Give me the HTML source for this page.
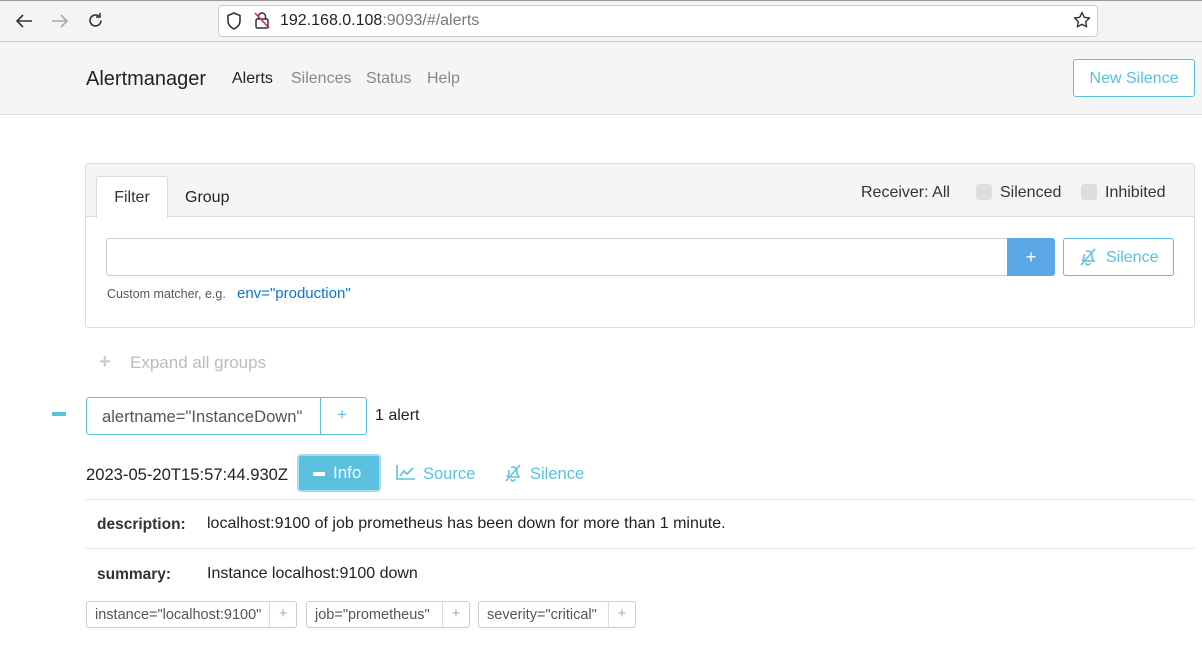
<!DOCTYPE html>
<html><head><meta charset="utf-8"><style>
*{box-sizing:border-box;margin:0;padding:0}
body{width:1202px;height:647px;overflow:hidden;background:#fff;font-family:"Liberation Sans","DejaVu Sans",sans-serif;color:#222;position:relative}
.a{position:absolute;white-space:nowrap}
.chrome{left:0;top:0;width:1202px;height:42px;background:#f5f4f3;border-top:1px solid #999;border-bottom:1px solid #ccc}
.url{left:218px;top:5px;width:880px;height:32px;background:#fff;border:1px solid #ccc;border-radius:4px}
.nav{left:0;top:42px;width:1202px;height:73px;background:#f5f5f5;border-bottom:1px solid #ddd}
.btn{border:1px solid #5bc0de;border-radius:3px;color:#5bc0de;background:#fff}
.tag{height:27px;border:1px solid #ccc;border-radius:3px;font-size:14.5px;color:#555;display:flex;align-items:center}
.tag span{padding:0 8px}
.tag b{font-weight:normal;border-left:1px solid #ddd;width:27px;text-align:center;color:#aaa;line-height:25px}
</style></head><body>
<div class="a chrome"></div>
<svg class="a" style="left:15px;top:13px" width="18" height="16" viewBox="0 0 18 16" fill="none" stroke="#333" stroke-width="1.6"><path d="M17 8H2M8 2L2 8l6 6"/></svg>
<svg class="a" style="left:51px;top:13px" width="18" height="16" viewBox="0 0 18 16" fill="none" stroke="#aaa" stroke-width="1.6"><path d="M1 8h15M10 2l6 6-6 6"/></svg>
<svg class="a" style="left:87px;top:12px" width="17" height="17" viewBox="0 0 17 17" fill="none" stroke="#333" stroke-width="1.6"><path d="M14 8.5a5.5 5.5 0 11-2-4.3"/><path d="M13 1v4h-4"/></svg>
<div class="a url"></div>
<svg class="a" style="left:226px;top:12px" width="16" height="18" viewBox="0 0 16 18"><path d="M8 1L2 3.5V9c0 4 3 6.5 6 8 3-1.5 6-4 6-8V3.5z" fill="none" stroke="#333" stroke-width="1.6"/></svg>
<svg class="a" style="left:254px;top:11px" width="16" height="18" viewBox="0 0 16 18"><rect x="2" y="8" width="12" height="9" rx="1.5" fill="none" stroke="#333" stroke-width="1.5"/><path d="M4.5 8V5.5a3.5 3.5 0 017 0V8" fill="none" stroke="#333" stroke-width="1.5"/><path d="M1 2l14 15" stroke="#e22850" stroke-width="1.6"/></svg>
<div class="a" style="left:280px;top:12px;font-size:16px;color:#222">192.168.0.108<span style="color:#777">:9093/#/alerts</span></div>
<svg class="a" style="left:1073px;top:11px" width="18" height="18" viewBox="0 0 18 18"><path d="M9 1.5l2.3 4.8 5.2.7-3.8 3.6.9 5.2L9 13.3l-4.6 2.5.9-5.2L1.5 7l5.2-.7z" fill="none" stroke="#333" stroke-width="1.4" stroke-linejoin="round"/></svg>

<div class="a nav"></div>
<div class="a" style="left:86px;top:68px;font-size:20px;color:#222">Alertmanager</div>
<div class="a" style="left:232px;top:70px;font-size:16px;color:#222">Alerts</div>
<div class="a" style="left:291px;top:70px;font-size:16px;color:#888">Silences</div>
<div class="a" style="left:366px;top:70px;font-size:16px;color:#888">Status</div>
<div class="a" style="left:427px;top:70px;font-size:16px;color:#888">Help</div>
<div class="a btn" style="left:1073px;top:59px;width:122px;height:38px;font-size:16px;line-height:37px;text-align:center">New Silence</div>

<div class="a" style="left:85px;top:163px;width:1110px;height:165px;border:1px solid #ddd;border-radius:3px"></div>
<div class="a" style="left:86px;top:164px;width:1108px;height:53px;background:#f5f5f6;border-bottom:1px solid #ddd"></div>
<div class="a" style="left:96px;top:176px;width:72px;height:42px;background:#fff;border:1px solid #ddd;border-bottom:none;border-radius:3px 3px 0 0;font-size:16px;color:#333;text-align:center;line-height:42px">Filter</div>
<div class="a" style="left:185px;top:189px;font-size:16px;color:#222">Group</div>
<div class="a" style="left:861px;top:184px;font-size:16px;color:#333">Receiver: All</div>
<div class="a" style="left:976px;top:184px;width:16px;height:16px;background:#ddd;border-radius:3px"></div>
<div class="a" style="left:1000px;top:184px;font-size:16px;color:#333">Silenced</div>
<div class="a" style="left:1081px;top:184px;width:16px;height:16px;background:#ddd;border-radius:3px"></div>
<div class="a" style="left:1105px;top:184px;font-size:16px;color:#333">Inhibited</div>
<div class="a" style="left:106px;top:238px;width:902px;height:38px;border:1px solid #ccc;border-right:none;border-radius:3px 0 0 3px"></div>
<div class="a" style="left:1007px;top:238px;width:48px;height:38px;background:#5ba7e6;border-radius:0 3px 3px 0;color:#fff;font-size:18px;text-align:center;line-height:38px">+</div>
<div class="a btn" style="left:1063px;top:238px;width:111px;height:38px;font-size:16px;line-height:37px;padding-left:42px">Silence</div>
<svg class="a" style="left:1078px;top:247px" width="20" height="20" viewBox="0 0 20 20" fill="none" stroke="#5bc0de" stroke-width="1.5"><path d="M5 14h11l-2-3V8a4 4 0 00-6-3.4M6 7v4l-2 3"/><path d="M8 16a2 2 0 004 0"/><path d="M3 18L17 2"/></svg>
<div class="a" style="left:107px;top:287px;font-size:12.5px;color:#555">Custom matcher, e.g.</div>
<div class="a" style="left:237px;top:285px;font-size:15px;color:#0a74d4">env="production"</div>

<div class="a" style="left:99px;top:351px;font-size:20px;color:#ccc;font-weight:bold">+</div>
<div class="a" style="left:130px;top:353px;font-size:17px;color:#bbb">Expand all groups</div>

<div class="a" style="left:52px;top:412px;width:14px;height:4px;background:#5bc0de"></div>
<div class="a" style="left:86px;top:397px;width:281px;height:38px;border:1px solid #5bc0de;border-radius:3px"></div>
<div class="a" style="left:320px;top:398px;width:1px;height:36px;background:#5bc0de"></div>
<div class="a" style="left:102px;top:407px;font-size:16.6px;color:#555">alertname="InstanceDown"</div>
<div class="a" style="left:337px;top:405px;font-size:17px;color:#5bc0de">+</div>
<div class="a" style="left:375px;top:407px;font-size:16px;color:#222">1 alert</div>

<div class="a" style="left:86px;top:465px;font-size:16.6px;color:#222">2023-05-20T15:57:44.930Z</div>
<div class="a" style="left:297px;top:454px;width:84px;height:38px;background:#5bc0de;border:2px solid #a6dcee;border-radius:4px;color:#fff;font-size:17px;line-height:34px;padding-left:14px"><span style="display:inline-block;width:12px;height:4px;background:#fff;vertical-align:middle;margin-right:8px"></span>Info</div>
<svg class="a" style="left:396px;top:464px" width="20" height="16" viewBox="0 0 20 16" fill="none" stroke="#5bc0de" stroke-width="1.6"><path d="M1 1v14h18"/><path d="M4 12l4-5 3 3 6-6"/></svg>
<div class="a" style="left:423px;top:465px;font-size:16.5px;color:#5bc0de">Source</div>
<svg class="a" style="left:503px;top:463px" width="20" height="20" viewBox="0 0 20 20" fill="none" stroke="#5bc0de" stroke-width="1.5"><path d="M5 14h11l-2-3V8a4 4 0 00-6-3.4M6 7v4l-2 3"/><path d="M8 16a2 2 0 004 0"/><path d="M3 18L17 2"/></svg>
<div class="a" style="left:530px;top:465px;font-size:16.5px;color:#5bc0de">Silence</div>

<div class="a" style="left:86px;top:499px;width:1109px;height:1px;background:#e5e5e5"></div>
<div class="a" style="left:97px;top:516px;font-size:15.5px;font-weight:bold;color:#333">description:</div>
<div class="a" style="left:207px;top:515px;font-size:16px;color:#222">localhost:9100 of job prometheus has been down for more than 1 minute.</div>
<div class="a" style="left:86px;top:548px;width:1109px;height:1px;background:#e5e5e5"></div>
<div class="a" style="left:97px;top:566px;font-size:15.5px;font-weight:bold;color:#333">summary:</div>
<div class="a" style="left:207px;top:565px;font-size:16px;color:#222">Instance localhost:9100 down</div>

<div class="a tag" style="left:86px;top:601px;width:211px"><span style="flex:1">instance="localhost:9100"</span><b>+</b></div>
<div class="a tag" style="left:306px;top:601px;width:164px"><span style="flex:1">job="prometheus"</span><b>+</b></div>
<div class="a tag" style="left:478px;top:601px;width:158px"><span style="flex:1">severity="critical"</span><b>+</b></div>
</body></html>
